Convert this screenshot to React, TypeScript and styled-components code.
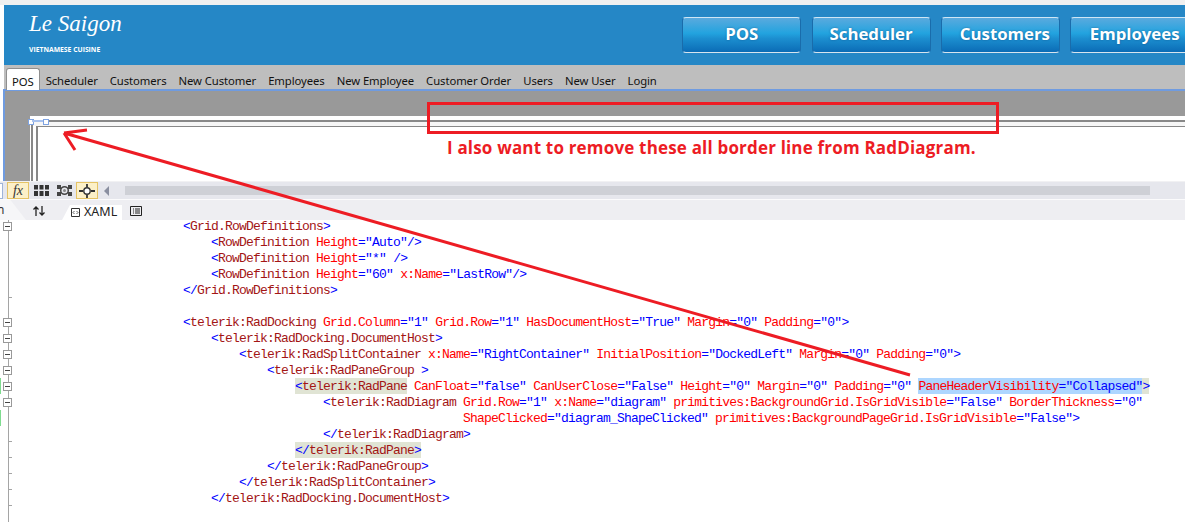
import styled, { createGlobalStyle } from "styled-components";

const GlobalStyle = createGlobalStyle`
  html, body {
    margin: 0;
    padding: 0;
    background: #fff;
  }
`;

const navButtons = [
  { label: "POS", nudge: 0 },
  { label: "Scheduler", nudge: 0 },
  { label: "Customers", nudge: 9 },
  { label: "Employees", nudge: 10 },
];
const tabs = ["POS", "Scheduler", "Customers", "New Customer", "Employees", "New Employee", "Customer Order", "Users", "New User", "Login"];

type Part = { text: string; mark?: "match" | "select" };
type Line = { indent?: number; parts?: Part[]; fold?: boolean; tick?: boolean; changed?: boolean };

const plain = (text: string): Part[] => [{ text }];

const lines: Line[] = [
  { indent: 0, parts: plain("<Grid.RowDefinitions>"), fold: true },
  { indent: 4, parts: plain('<RowDefinition Height="Auto"/>') },
  { indent: 4, parts: plain('<RowDefinition Height="*" />') },
  { indent: 4, parts: plain('<RowDefinition Height="60" x:Name="LastRow"/>') },
  { indent: 0, parts: plain("</Grid.RowDefinitions>"), tick: true },
  {},
  { indent: 0, parts: plain('<telerik:RadDocking Grid.Column="1" Grid.Row="1" HasDocumentHost="True" Margin="0" Padding="0">'), fold: true },
  { indent: 4, parts: plain("<telerik:RadDocking.DocumentHost>"), fold: true },
  { indent: 8, parts: plain('<telerik:RadSplitContainer x:Name="RightContainer" InitialPosition="DockedLeft" Margin="0" Padding="0">'), fold: true },
  { indent: 12, parts: plain("<telerik:RadPaneGroup >"), fold: true },
  {
    indent: 16,
    fold: true,
    changed: true,
    parts: [
      { text: "<telerik:RadPane", mark: "match" },
      { text: ' CanFloat="false" CanUserClose="False" Height="0" Margin="0" Padding="0" ' },
      { text: 'PaneHeaderVisibility="Collapsed"', mark: "select" },
      { text: ">", mark: "match" },
    ],
  },
  { indent: 20, parts: plain('<telerik:RadDiagram Grid.Row="1" x:Name="diagram" primitives:BackgroundGrid.IsGridVisible="False" BorderThickness="0"'), fold: true },
  { indent: 40, parts: plain('ShapeClicked="diagram_ShapeClicked" primitives:BackgroundPageGrid.IsGridVisible="False">'), changed: true },
  { indent: 20, parts: plain("</telerik:RadDiagram>"), tick: true },
  { indent: 16, parts: [{ text: "</telerik:RadPane>", mark: "match" }], tick: true },
  { indent: 12, parts: plain("</telerik:RadPaneGroup>"), tick: true },
  { indent: 8, parts: plain("</telerik:RadSplitContainer>"), tick: true },
  { indent: 4, parts: plain("</telerik:RadDocking.DocumentHost>"), tick: true },
  {},
];

const tokenColors = {
  delim: "#0000ff",
  name: "#a31515",
  attr: "#ff0000",
  value: "#0000ff",
  space: "inherit",
};

// rough xaml colouring, good enough for one screen of markup
const tokenize = (src: string) => {
  const out: { text: string; kind: keyof typeof tokenColors }[] = [];
  const re = /(\s+)|(<\/?|\/?>)|("[^"]*")|(=)|([^\s<>="/]+)/g;
  let afterOpen = false;
  let m: RegExpExecArray | null;
  while ((m = re.exec(src))) {
    if (m[1]) out.push({ text: m[1], kind: "space" });
    else if (m[2]) {
      out.push({ text: m[2], kind: "delim" });
      afterOpen = m[2].startsWith("<");
    } else if (m[3] || m[4]) out.push({ text: m[0], kind: "delim" });
    else {
      out.push({ text: m[0], kind: afterOpen ? "name" : "attr" });
      afterOpen = false;
    }
  }
  return out;
};

const App = () => {
  return (
    <Page>
      <GlobalStyle />
      <TopStrip />
      <Header>
        <Brand>
          <BrandName>Le Saigon</BrandName>
          <BrandTag>VIETNAMESE CUISINE</BrandTag>
        </Brand>
        {navButtons.map(({ label, nudge }) => (
          <NavButton key={label} $nudge={nudge}>
            {label}
          </NavButton>
        ))}
      </Header>
      <TabBar>
        {tabs.map((tab, i) => (
          <Tab key={tab} $active={i === 0}>
            {tab}
          </Tab>
        ))}
      </TabBar>
      <Canvas>
        <Sheet>
          <OuterFrame>
            <InnerFrame />
          </OuterFrame>
        </Sheet>
        <Handle $left={25} />
        <HandleLine />
        <Handle $left={40} />
      </Canvas>
      <ToolBar>
        <FieldStub />
        <Toggle>
          <FxLabel>fx</FxLabel>
        </Toggle>
        <ToolIcon $gap={5} width="15" height="11" viewBox="0 0 15 11">
          <path fill="#333" d="M0 0h4v4.500H0zM5.500 0h4v4.500h-4zM11 0h4v4.500h-4zM0 6h4v5H0zM5.500 6h4v5h-4zM11 6h4v5h-4z" />
        </ToolIcon>
        <ToolIcon $gap={8} width="15" height="11" viewBox="0 0 15 11">
          <path fill="#444" d="M0 0h4v4H0zM11 0h4v4h-4zM0 7h4v4H0zM11 7h4v4h-4z" />
          <circle cx="7.500" cy="5.500" r="3.800" fill="#e6e7ed" stroke="#444" strokeWidth="1.500" />
          <circle cx="7.500" cy="5.500" r="1.500" fill="#888" />
        </ToolIcon>
        <Toggle>
          <svg width="16" height="14" viewBox="0 0 16 14">
            <path stroke="#333" strokeWidth="1.800" d="M0 7h4M12 7h4M8 0v3M8 11v3" />
            <circle cx="8" cy="7" r="3.200" fill="#fff" stroke="#333" strokeWidth="1.400" />
          </svg>
        </Toggle>
        <ScrollArrow />
        <ScrollTrack />
      </ToolBar>
      <ViewBar>
        <HiddenTab>n</HiddenTab>
        <SwapIcon width="12" height="10" viewBox="0 0 12 10">
          <path fill="none" stroke="#222" strokeWidth="1.300" d="M3 10V1M0.500 3.500L3 1l2.500 2.500M9 0v9M6.500 6.500L9 9l2.500-2.500" />
        </SwapIcon>
        <ViewTab>
          <svg width="9" height="9" viewBox="0 0 9 9">
            <path fill="none" stroke="#333" d="M.5.500h8v8h-8z" />
            <path fill="none" stroke="#333" d="M3.500 3L2 4.500 3.500 6M5.500 3L7 4.500 5.500 6" strokeWidth=".8" />
          </svg>
          XAML
        </ViewTab>
        <SplitIcon width="12" height="10" viewBox="0 0 12 10">
          <path fill="none" stroke="#222" d="M.5.500h11v9H.5zM3 3h1M5 3h5M3 5h1M5 5h5M3 7h1M5 7h5" />
        </SplitIcon>
      </ViewBar>
      <CodeArea>
        {lines.map((line, i) => (
          <CodeRow key={i}>
            <Gutter $tick={line.tick} $changed={line.changed}>
              {line.fold && <FoldBox />}
            </Gutter>
            <CodeText $indent={line.indent ?? 0}>
              {line.parts?.map((part, j) => (
                <Marked key={j} $mark={part.mark}>
                  {tokenize(part.text).map((t, k) => (
                    <span key={k} style={{ color: tokenColors[t.kind] }}>
                      {t.text}
                    </span>
                  ))}
                </Marked>
              ))}
            </CodeText>
          </CodeRow>
        ))}
      </CodeArea>
      <Callout>I also want to remove these all border line from RadDiagram.</Callout>
      <CalloutBox />
      <ArrowLayer width="1185" height="524" viewBox="0 0 1185 524">
        <path fill="none" stroke="#ed1c24" strokeWidth="3" d="M64 133L910 375M64 133L87 130M64 133L75 150" />
      </ArrowLayer>
    </Page>
  );
};

export default App;

const Page = styled.div`
  position: relative;
  width: 1185px;
  height: 524px;
  overflow: hidden;
  background: #fff;
`;

const TopStrip = styled.div`
  height: 5px;
  background: #f0f0f0;
`;

const Header = styled.header`
  display: flex;
  align-items: flex-start;
  height: 60px;
  margin-left: 4px;
  padding-top: 12px;
  box-sizing: border-box;
  gap: 10.3px;
  background: #2587c6;
  overflow: hidden;
`;

const Brand = styled.div`
  flex: 0 0 668px;
  margin-top: -7px;
  padding-left: 25px;
  box-sizing: border-box;
  color: #fff;
`;

const BrandName = styled.div`
  font-family: "Liberation Serif", serif;
  font-style: italic;
  font-size: 23px;
  line-height: 28px;
`;

const BrandTag = styled.div`
  margin-top: 7px;
  font-family: "Open Sans", sans-serif;
  font-weight: 700;
  font-size: 6.8px;
  line-height: 10px;
`;

const NavButton = styled.button<{ $nudge: number }>`
  flex: 0 0 119px;
  height: 36px;
  padding: 0 0 3px ${({ $nudge }) => $nudge}px;
  box-sizing: border-box;
  border: 1px solid #1a6cab;
  border-top-color: #cfe6f5;
  border-bottom-color: #d8e4ee;
  border-radius: 4px;
  background: linear-gradient(#5aaade 0%, #22a3df 45%, #1c8fd0 60%, #0b6cb6 100%);
  color: #fff;
  font-family: "Open Sans", sans-serif;
  font-weight: 700;
  font-size: 16.8px;
  text-shadow: 0 0 2px rgba(0, 40, 90, 0.5);
`;

const TabBar = styled.nav`
  position: relative;
  z-index: 1;
  display: flex;
  align-items: flex-end;
  height: 24px;
  margin-left: 4px;
  padding-left: 2px;
  background: #bebebe;
`;

const Tab = styled.div<{ $active?: boolean }>`
  height: 21px;
  margin-bottom: ${({ $active }) => ($active ? "-1px" : "0")};
  padding: 0 5px;
  border: ${({ $active }) => ($active ? "1px solid #8f8f8f" : "1px solid transparent")};
  border-bottom: 0;
  border-radius: 3px 3px 0 0;
  background: ${({ $active }) => ($active ? "#fff" : "transparent")};
  color: #111;
  font-family: "Noto Sans", sans-serif;
  font-size: 11.3px;
  letter-spacing: -0.08px;
  line-height: 25px;
  white-space: nowrap;
`;

const Canvas = styled.div`
  position: relative;
  height: 92px;
  margin-left: 3px;
  padding: 25px 0 0 25px;
  box-sizing: border-box;
  border-top: 2px solid #6f9be0;
  border-left: 2px solid #6f9be0;
  background: #999;
`;

const Sheet = styled.div`
  height: 100%;
  padding: 4px 0 0 1px;
  box-sizing: border-box;
  background: #fff;
`;

const OuterFrame = styled.div`
  height: 100%;
  padding: 4px 0 0 3px;
  box-sizing: border-box;
  border-top: 2px solid #888;
  border-left: 2px solid #888;
  background: linear-gradient(#f6f6f6, #f6f6f6) top / 100% 4px no-repeat #fff;
`;

const InnerFrame = styled.div`
  height: 100%;
  box-sizing: border-box;
  border-top: 1.500px solid #888;
  border-left: 2px solid #888;
  background: #fff;
`;

const Handle = styled.span<{ $left: number }>`
  position: absolute;
  top: 28px;
  left: ${({ $left }) => $left - 2}px;
  width: 4px;
  height: 4px;
  border: 1px solid #7ea3e2;
  background: #fff;
`;

const HandleLine = styled.span`
  position: absolute;
  top: 29px;
  left: 27px;
  width: 11px;
  height: 2px;
  background: #a9c2ee;
`;

const ToolBar = styled.div`
  display: flex;
  align-items: center;
  height: 18px;
  box-sizing: border-box;
  border-top: 1px solid #f1f1f3;
  background: #e6e7ed;
`;

const FieldStub = styled.div`
  width: 3px;
  height: 16px;
  box-sizing: border-box;
  border: 1px solid #9fb4d8;
  border-left: 0;
  background: #fff;
`;

const Toggle = styled.div`
  display: flex;
  align-items: center;
  justify-content: center;
  width: 22px;
  height: 17px;
  margin-left: 4px;
  box-sizing: border-box;
  border: 1px solid #e5c365;
  background: #fcf0c8;
`;

const FxLabel = styled.span`
  font-family: "Liberation Serif", serif;
  font-style: italic;
  font-size: 14px;
  line-height: 14px;
  color: #333;
`;

const ToolIcon = styled.svg<{ $gap: number }>`
  flex: none;
  margin-left: ${({ $gap }) => $gap}px;
`;

const ScrollArrow = styled.div`
  width: 0;
  height: 0;
  margin-left: 6px;
  border-top: 5px solid transparent;
  border-bottom: 5px solid transparent;
  border-right: 5px solid #8a8fa0;
`;

const ScrollTrack = styled.div`
  width: 1025px;
  height: 9px;
  margin-left: 16px;
  background: #ced0d6;
`;

const ViewBar = styled.div`
  position: relative;
  z-index: 1;
  display: flex;
  align-items: flex-end;
  height: 21px;
  box-sizing: border-box;
  border-top: 1px solid #fbfbfc;
  background: #eeeef2;
`;

const HiddenTab = styled.div`
  width: 26px;
  height: 100%;
  margin-right: 7px;
  padding-top: 2px;
  box-sizing: border-box;
  clip-path: polygon(0 0, 40% 0, 100% 100%, 0 100%);
  background: #f6f6f8;
  color: #333;
  font-family: "Noto Sans", sans-serif;
  font-size: 12px;
  line-height: 16px;
  text-indent: -3px;
`;

const SwapIcon = styled.svg`
  align-self: flex-start;
  flex: none;
  margin-top: 6px;
`;

const ViewTab = styled.div`
  display: flex;
  align-items: center;
  gap: 4px;
  width: 60px;
  height: 15px;
  margin-left: 17px;
  padding: 0 0 1px 9px;
  box-sizing: border-box;
  clip-path: polygon(8px 0, 100% 0, 100% 100%, 0 100%);
  background: #fff;
  color: #222;
  font-family: "Noto Sans", sans-serif;
  font-size: 12.500px;
  line-height: 14px;
`;

const SplitIcon = styled.svg`
  align-self: flex-start;
  flex: none;
  margin: 6px 0 0 8px;
`;

const CodeArea = styled.main`
  margin-top: -2px;
  font-family: "Liberation Mono", monospace;
  font-size: 13px;
  letter-spacing: -0.8px;
`;

const CodeRow = styled.div`
  display: flex;
  height: 16px;
  white-space: pre;
`;

const Gutter = styled.div<{ $tick?: boolean; $changed?: boolean }>`
  flex: 0 0 183px;
  box-sizing: border-box;
  padding: 4px 0 0 3px;
  background:
    linear-gradient(${({ $changed }) => ($changed ? "#7fdc8f, #7fdc8f" : "transparent, transparent")}) 0 0 / 1px 100% no-repeat,
    linear-gradient(${({ $tick }) => ($tick ? "#a5a5a5, #a5a5a5" : "transparent, transparent")}) 8px 100% / 4px 1px no-repeat,
    linear-gradient(#a5a5a5, #a5a5a5) 8px 0 / 1px 100% no-repeat;
`;

const FoldBox = styled.div`
  position: relative;
  width: 9px;
  height: 9px;
  box-sizing: border-box;
  border: 1px solid #999;
  background: #fff;

  &::after {
    content: "";
    position: absolute;
    left: 1px;
    right: 1px;
    top: 3px;
    height: 1px;
    background: #444;
  }
`;

const CodeText = styled.div<{ $indent: number }>`
  padding-left: ${({ $indent }) => $indent * 7}px;
  line-height: 18px;
`;

const Marked = styled.span<{ $mark?: "match" | "select" }>`
  display: inline-block;
  vertical-align: top;
  height: 16px;
  background: ${({ $mark }) => ($mark === "match" ? "#e0e4d4" : $mark === "select" ? "#add6ff" : "transparent")};
  ${({ $mark }) => $mark === "select" && "box-shadow: 1px 0 0 #111;"}
`;

const Callout = styled.div`
  position: absolute;
  z-index: 2;
  top: 136px;
  left: 447px;
  color: #ed1c24;
  font-family: "Open Sans", sans-serif;
  font-weight: 700;
  font-size: 17px;
  letter-spacing: 0.18px;
  line-height: 23px;
  white-space: nowrap;
`;

const CalloutBox = styled.div`
  position: absolute;
  z-index: 2;
  top: 102px;
  left: 427px;
  width: 572px;
  height: 32px;
  box-sizing: border-box;
  border: 3px solid #ed1c24;
`;

const ArrowLayer = styled.svg`
  position: absolute;
  z-index: 2;
  top: 0;
  left: 0;
  pointer-events: none;
`;
